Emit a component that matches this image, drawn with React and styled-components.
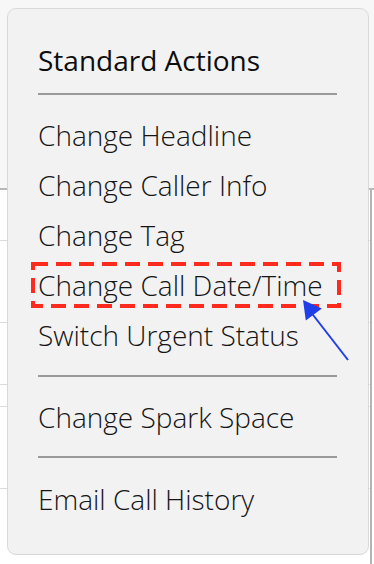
import React from 'react';
import styled, { createGlobalStyle } from 'styled-components';

const Global = createGlobalStyle`
  html, body {
    margin: 0;
    padding: 0;
    background: #ffffff;
  }
  body {
    font-family: "Open Sans", "Noto Sans", sans-serif;
    width: 374px;
    height: 564px;
    overflow: hidden;
  }
`;

const Page = styled.div`
  position: relative;
  width: 374px;
  height: 564px;
  overflow: hidden;
`;

const TopBand = styled.div`
  height: 188px;
  background: #f7f7f7;
  border-bottom: 2px solid #b8b8b8;
`;

const Table = styled.div`
  width: 370px;
  border-right: 2px solid #b4b4b4;
  display: flex;
  flex-direction: column;
`;

const Row = styled.div`
  height: ${(p) => p.h}px;
  border-bottom: 1px solid #dcdcdc;
  box-sizing: border-box;
`;

const Menu = styled.div`
  position: absolute;
  left: 7px;
  top: 8px;
  width: 362px;
  height: 547px;
  box-sizing: border-box;
  background: #f2f2f2;
  border: 1px solid #d9d9d9;
  border-radius: 9px;
  padding: 26px 31px 0 30px;
  display: flex;
  flex-direction: column;
`;

const Heading = styled.div`
  height: 50px;
  line-height: 50px;
  font-size: 28px;
  font-weight: 400;
  color: #0d0d0d;
  white-space: nowrap;
`;

const Divider = styled.div`
  height: 2px;
  background: #9a9a9a;
  margin: ${(p) => p.m || '15px 0'};
`;

const Item = styled.div`
  position: relative;
  height: 50px;
  line-height: 50px;
  font-size: 28px;
  font-weight: 300;
  color: #151515;
  white-space: nowrap;
`;

const Highlight = styled.svg`
  position: absolute;
  left: -7px;
  top: 2px;
  overflow: visible;
`;

const Arrow = styled.svg`
  position: absolute;
  left: 296px;
  top: 296px;
  overflow: visible;
`;

const rows = [51, 82, 62, 22, 82, 200];

export default function App() {
  return (
    <>
      <Global />
      <Page>
        <TopBand />
        <Table>
          {rows.map((h, i) => (
            <Row key={i} h={h} />
          ))}
        </Table>
        <Menu>
          <Heading>Standard Actions</Heading>
          <Divider m="8px 0 15px" />
          <Item>Change Headline</Item>
          <Item>Change Caller Info</Item>
          <Item>Change Tag</Item>
          <Item>
            Change Call Date/Time
            <Highlight width="310" height="46">
              <rect
                x="2"
                y="2"
                width="306"
                height="42"
                fill="none"
                stroke="#ff2a1e"
                strokeWidth="4"
                strokeDasharray="15 8"
              />
            </Highlight>
          </Item>
          <Item>Switch Urgent Status</Item>
          <Divider />
          <Item>Change Spark Space</Item>
          <Divider m="14px 0 16px" />
          <Item>Email Call History</Item>
        </Menu>
        <Arrow width="60" height="70">
          <line x1="52" y1="64" x2="14" y2="15" stroke="#1f3fe8" strokeWidth="2" />
          <polygon points="7,4 25.8,12.4 9.8,24.4" fill="#1f3fe8" />
        </Arrow>
      </Page>
    </>
  );
}
